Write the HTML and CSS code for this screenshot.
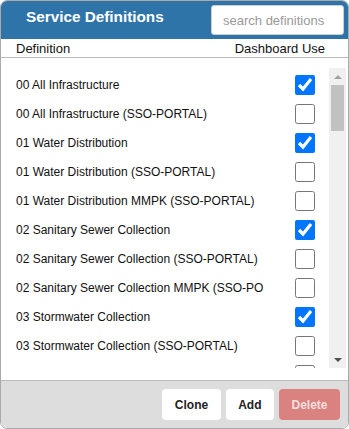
FILE: index.html
```
<!DOCTYPE html>
<html lang="en">
<head>
    <meta charset="UTF-8">
    <title>Service Definitions</title>
    <link rel="stylesheet" href="styles.css">
</head>
<body>
    <div class="panel">
        <!-- Title bar -->
        <div class="panel-header">
            <h1>Service Definitions</h1>
            <input type="text" class="search" placeholder="search definitions">
        </div>

        <!-- Column titles -->
        <div class="columns">
            <span>Definition</span>
            <span>Dashboard Use</span>
        </div>

        <!-- Definition list (names are cut to 41 chars) -->
        <div class="list-wrap">
            <div class="list">
                <label class="row"><span class="name">00 All Infrastructure</span><input type="checkbox" checked></label>
                <label class="row"><span class="name">00 All Infrastructure (SSO-PORTAL)</span><input type="checkbox"></label>
                <label class="row"><span class="name">01 Water Distribution</span><input type="checkbox" checked></label>
                <label class="row"><span class="name">01 Water Distribution (SSO-PORTAL)</span><input type="checkbox"></label>
                <label class="row"><span class="name">01 Water Distribution MMPK (SSO-PORTAL)</span><input type="checkbox"></label>
                <label class="row"><span class="name">02 Sanitary Sewer Collection</span><input type="checkbox" checked></label>
                <label class="row"><span class="name">02 Sanitary Sewer Collection (SSO-PORTAL)</span><input type="checkbox"></label>
                <label class="row"><span class="name">02 Sanitary Sewer Collection MMPK (SSO-PO</span><input type="checkbox"></label>
                <label class="row"><span class="name">03 Stormwater Collection</span><input type="checkbox" checked></label>
                <label class="row"><span class="name">03 Stormwater Collection (SSO-PORTAL)</span><input type="checkbox"></label>
                <label class="row"><span class="name">03 Stormwater Collection MMPK (SSO-PORTA</span><input type="checkbox"></label>
            </div>
            <!-- scroll track, drawn by hand so it shows in every browser -->
            <div class="scrollbar">
                <span class="arrow arrow-up"></span>
                <span class="thumb"></span>
                <span class="arrow arrow-down"></span>
            </div>
        </div>

        <!-- Actions -->
        <div class="panel-footer">
            <button class="btn">Clone</button>
            <button class="btn">Add</button>
            <button class="btn btn-delete" disabled>Delete</button>
        </div>
    </div>
</body>
</html>
```

FILE: styles.css
```
* {
    margin: 0;
    padding: 0;
    box-sizing: border-box;
}

body {
    font-family: "Liberation Sans", Arial, sans-serif;
    font-size: 12px;
    color: #111;
    background: #fff;
}

/* Panel */
.panel {
    width: 349px;
    height: 429px;
    border: 1px solid #aaa;
    border-radius: 7px;
    overflow: hidden;
    display: flex;
    flex-direction: column;
}

.panel-header {
    height: 38px;
    background: #2e74a9;
    display: flex;
    align-items: center;
    justify-content: space-between;
    padding: 0 4px 0 25px;
}

.panel-header h1 {
    font-size: 15.3px;
    font-weight: 700;
    color: #fff;
    margin-top: -6px;
}

.search {
    width: 133px;
    height: 30px;
    border: 1px solid #ccc;
    border-radius: 3px;
    padding: 0 11px;
    font-family: "Liberation Sans", Arial, sans-serif;
    font-size: 13px;
    color: #333;
    outline: none;
}

.search::placeholder {
    color: #999;
}

/* Column titles */
.columns {
    height: 19px;
    display: flex;
    justify-content: space-between;
    align-items: center;
    padding: 0 23px 0 15px;
    border-bottom: 1px solid #bbb;
    font-size: 13px;
}

/* List */
.list-wrap {
    flex: 1;
    display: flex;
    padding: 10px 2px 10px 15px;
}

.list {
    flex: 1;
    height: 300px;
    overflow: hidden;
    padding-top: 2px;
}

.row {
    height: 29px;
    display: flex;
    align-items: center;
    justify-content: space-between;
    padding-right: 14px;
}

.row .name {
    white-space: nowrap;
}

.row input {
    width: 20px;
    height: 20px;
    margin: 0;
    flex-shrink: 0;
    accent-color: #0075ff;
}

/* Scrollbar */
.scrollbar {
    width: 17px;
    height: 300px;
    background: #f0f0f0;
    display: flex;
    flex-direction: column;
    align-items: center;
}

.arrow {
    width: 17px;
    height: 17px;
    display: flex;
    justify-content: center;
    align-items: center;
}

.arrow::before {
    content: "";
    border-left: 4px solid transparent;
    border-right: 4px solid transparent;
}

.arrow-up::before {
    border-bottom: 4px solid #a3a3a3;
}

.arrow-down {
    margin-top: auto;
}

.arrow-down::before {
    border-top: 4px solid #505050;
}

.thumb {
    width: 13px;
    height: 46px;
    background: #c1c1c1;
}

/* Footer */
.panel-footer {
    height: 48px;
    background: #ddd;
    border-top: 1px solid #bbb;
    display: flex;
    justify-content: flex-end;
    align-items: center;
    gap: 5px;
    padding: 0 8px 0 0;
}

.btn {
    height: 31px;
    padding: 0 12.5px;
    border: none;
    border-radius: 4px;
    background: #fff;
    font-family: "Liberation Sans", Arial, sans-serif;
    font-size: 12px;
    font-weight: 700;
    color: #222;
}

.btn-delete {
    background: #d9827f;
    color: #f6dede;
}
```
